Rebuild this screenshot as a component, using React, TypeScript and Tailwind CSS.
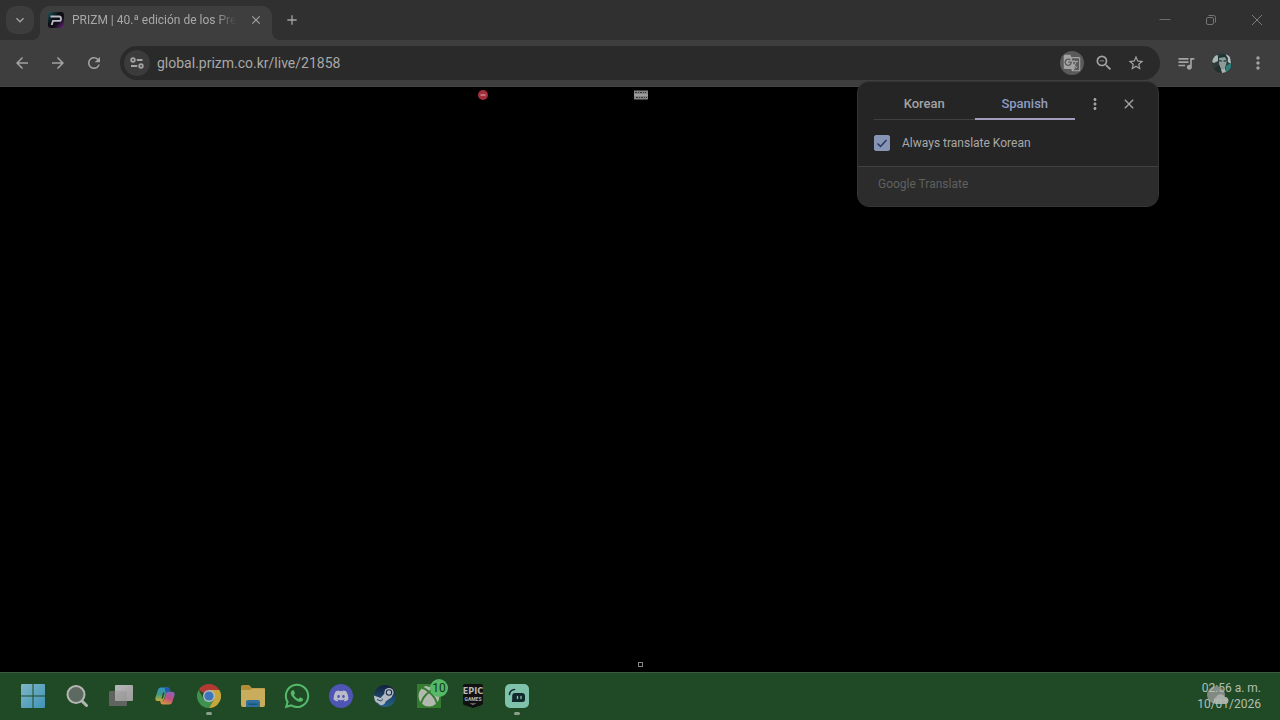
import { useState } from "react";
import type { ReactNode } from "react";
import {
  MdAdd,
  MdArrowBack,
  MdArrowForward,
  MdClose,
  MdGTranslate,
  MdKeyboardArrowDown,
  MdMoreVert,
  MdQueueMusic,
  MdRefresh,
  MdStarBorder,
  MdZoomOut,
} from "react-icons/md";
import { FaDiscord, FaWhatsapp } from "react-icons/fa";
import { clsx } from "clsx";

function PrizmIcon() {
  return (
    <svg viewBox="0 0 16 16" className="h-4 w-4 shrink-0" aria-hidden>
      <defs>
        <linearGradient id="prizm" x1="0" y1="0" x2="1" y2="1">
          <stop offset="0" stopColor="#1b5c5f" />
          <stop offset="0.4" stopColor="#0c0c12" />
          <stop offset="0.65" stopColor="#140d1c" />
          <stop offset="1" stopColor="#6b2a86" />
        </linearGradient>
      </defs>
      <rect width="16" height="16" rx="3" fill="url(#prizm)" />
      <path d="M2.500 4.500H11a2 2 0 0 1 2 2v.4a2 2 0 0 1-2 2H5L3.600 13" fill="none" stroke="#b9bcc4" strokeWidth="1.8" />
    </svg>
  );
}

function TuneIcon() {
  return (
    <svg viewBox="0 0 16 16" className="h-4 w-4" fill="none" stroke="#a3a3a3" strokeWidth="1.8" aria-hidden>
      <circle cx="4" cy="5" r="1.800" />
      <path d="M7.800 5H13.500M2 11h6.200" />
      <circle cx="12" cy="11" r="1.800" />
    </svg>
  );
}

function Avatar() {
  return (
    <svg viewBox="0 0 20 20" className="h-5 w-5" aria-hidden>
      <defs>
        <clipPath id="avatar">
          <circle cx="10" cy="10" r="10" />
        </clipPath>
      </defs>
      <g clipPath="url(#avatar)">
        <rect width="20" height="20" fill="#303a3a" />
        <path d="M0 5l4-3 3 1-1 5-4 2-2-1z" fill="#a9b5b3" />
        <path d="M14 1l4 2 1 8-3-2z" fill="#b6bebd" />
        <path d="M6 3l6-2 4 4-1 4-9-1z" fill="#1c3534" />
        <path d="M7 5l6-1 2 4-2 7-4 1-2-5z" fill="#8e9a98" />
        <path d="M7 7l3 .6v1L7.4 8.500zM11.500 7.500L15 7l-.5 1.500-3 .3z" fill="#173c3d" />
        <path d="M3 15l4-3 2 5 1 3H3z" fill="#23302f" />
        <path d="M14 13l5-3v7l-5 3z" fill="#2b8079" />
        <path d="M9 16l4-1 1 5h-4z" fill="#aab3b1" />
      </g>
    </svg>
  );
}

function StartIcon() {
  return (
    <svg viewBox="0 0 24 24" className="h-6 w-6" aria-hidden>
      <defs>
        <linearGradient id="start" x1="0" y1="0" x2="1" y2="1">
          <stop offset="0" stopColor="#7fb6c6" />
          <stop offset="1" stopColor="#3f93b8" />
        </linearGradient>
      </defs>
      <path d="M1 0h10.500v11.500H0V1a1 1 0 0 1 1-1zM12.500 0H23a1 1 0 0 1 1 1v10.500H12.500zM0 12.500h11.500V24H1a1 1 0 0 1-1-1zM12.500 12.500H24V23a1 1 0 0 1-1 1H12.500z" fill="url(#start)" />
    </svg>
  );
}

function SearchIcon() {
  return (
    <svg viewBox="0 0 24 24" className="h-6 w-6" aria-hidden>
      <path d="M17 17l4.500 4.500" stroke="#b4b6b3" strokeWidth="3" strokeLinecap="round" />
      <circle cx="11" cy="10.500" r="8.500" fill="#5d6a62" stroke="#b4b6b3" strokeWidth="2" />
    </svg>
  );
}

function TaskViewIcon() {
  return (
    <svg viewBox="0 0 26 24" className="h-6 w-[26px]" aria-hidden>
      <defs>
        <linearGradient id="taskview" x1="0" y1="0" x2="1" y2="1">
          <stop offset="0" stopColor="#b9b9b9" />
          <stop offset="1" stopColor="#9c9c9c" />
        </linearGradient>
      </defs>
      <rect x="1" y="7" width="18" height="15" rx="1" fill="#5f6461" />
      <rect x="7" y="1" width="18" height="16" rx="1" fill="url(#taskview)" />
      <path d="M7 7h12v10H7z" fill="#888" opacity="0.300" />
    </svg>
  );
}

function CopilotIcon() {
  return (
    <svg viewBox="0 0 20 18" className="h-[18px] w-5" aria-hidden>
      <defs>
        <linearGradient id="copilot-a" x1="0" y1="0" x2="0" y2="1">
          <stop offset="0" stopColor="#2f93c9" />
          <stop offset="0.500" stopColor="#3f9a86" />
          <stop offset="1" stopColor="#c6ac31" />
        </linearGradient>
        <linearGradient id="copilot-b" x1="0.700" y1="0" x2="0.300" y2="1">
          <stop offset="0" stopColor="#8a63b8" />
          <stop offset="0.500" stopColor="#c24f81" />
          <stop offset="1" stopColor="#d09a3c" />
        </linearGradient>
      </defs>
      <path d="M14 17.500H8c-1.500 0-2.200-.9-2.500-2L5 13.800h2.200c1.300 0 1.900-.7 2.200-1.800L11 6.300C11.400 5 12.200 4.700 13.500 4.700H17c2.200 0 3.100 1.500 2.500 3.500l-2.200 6.800C16.700 16.700 15.700 17.500 14 17.500z" fill="url(#copilot-b)" />
      <path d="M6 .5h6.500c1.300 0 2 .9 2.300 2l.6 2.200h-2.400c-1.200 0-1.800.7-2.100 1.700L9 12c-.4 1.200-1 2-2.500 2H3C.8 14-.1 12.500.5 10.500L2.700 3.500C3.200 1.500 4.300.5 6 .5z" fill="url(#copilot-a)" />
      <path d="M9.500.5h3c1.300 0 2 .9 2.300 2l.6 2.200h-2.400c-1.200 0-1.800.7-2.100 1.700z" fill="#2457b5" />
      <path d="M8 5.500h1.500L8 11.500H6.500z" fill="#204a25" />
    </svg>
  );
}

function ChromeIcon() {
  return (
    <svg viewBox="0 0 24 24" className="h-6 w-6" aria-hidden>
      <path d="M12 12L1.600 6A12 12 0 0 1 22.400 6z" fill="#b33a33" />
      <path d="M1.600 6a12 12 0 0 0 10.400 18l5.200-9L12 12 6.800 15z" fill="#3f9150" />
      <path d="M12 24A12 12 0 0 0 22.400 6H12l5.200 9z" fill="#c5a73c" />
      <circle cx="12" cy="12" r="6" fill="#b7bcbb" />
      <circle cx="12" cy="12" r="4.600" fill="#3c74bb" />
    </svg>
  );
}

function FolderIcon() {
  return (
    <svg viewBox="0 0 26 24" className="h-6 w-[26px]" aria-hidden>
      <path d="M1 2.500A1.500 1.500 0 0 1 2.500 1H9l3 3h12a1 1 0 0 1 1 1v6H1z" fill="#b08d36" />
      <path d="M1 6h9l2-1.500h12.500a.5.5 0 0 1 .5.500v16a2 2 0 0 1-2 2H3a2 2 0 0 1-2-2z" fill="#c9ad5c" />
      <path d="M8 16h10a2 2 0 0 1 2 2v5H6v-5a2 2 0 0 1 2-2z" fill="#2e6f9c" />
      <path d="M8.500 19.500h9V21h-9z" fill="#1d5277" />
    </svg>
  );
}

function SteamIcon() {
  return (
    <svg viewBox="0 0 24 24" className="h-6 w-6" aria-hidden>
      <defs>
        <linearGradient id="steam" x1="0" y1="0" x2="0" y2="1">
          <stop offset="0" stopColor="#14203c" />
          <stop offset="1" stopColor="#27628c" />
        </linearGradient>
        <clipPath id="steam-clip">
          <circle cx="12" cy="12" r="11" />
        </clipPath>
      </defs>
      <circle cx="12" cy="12" r="11" fill="url(#steam)" />
      <g clipPath="url(#steam-clip)">
        <path d="M0 11l7.500 3 4.500-5h6l1 4-6.500 4.500A4 4 0 0 1 5 19L0 17z" fill="#b5bbc0" />
        <circle cx="16" cy="8.500" r="4.600" fill="#b5bbc0" />
        <circle cx="16" cy="8.500" r="2.700" fill="#b5bbc0" stroke="#1b3152" strokeWidth="1.100" />
        <path d="M4 15.500l4 1.500a1.500 1.500 0 0 0 1-2.500" fill="none" stroke="#244f77" strokeWidth="1" />
      </g>
    </svg>
  );
}

function XboxIcon() {
  return (
    <span className="relative flex h-6 w-6">
      <svg viewBox="0 0 24 24" className="h-6 w-6" aria-hidden>
        <rect width="24" height="24" fill="#347d30" />
        <circle cx="12" cy="12" r="10.500" fill="#b3b9b0" />
        <path d="M4 3.500C8 4 10 6 12 8c2-2 4-4 8-4.500M12 8C8 11 5 15.500 4 20M12 8c4 3 7 7.500 8 12" fill="none" stroke="#347d30" strokeWidth="2" />
        <path d="M7 1.500c2 0 3.500.7 5 1.700 1.500-1 3-1.700 5-1.700L12 0z" fill="#347d30" />
      </svg>
      <span className="absolute -top-[5px] -right-[7px] flex h-[18px] w-[18px] items-center justify-center rounded-full bg-[#55b866] text-[12px] leading-none text-[#123718]">
        10
      </span>
    </span>
  );
}

function EpicIcon() {
  return (
    <span className="relative flex h-6 w-5 flex-col items-center">
      <svg viewBox="0 0 20 24" className="absolute inset-0 h-6 w-5" aria-hidden>
        <path d="M2 0h16a2 2 0 0 1 2 2v17.500a1.500 1.500 0 0 1-1 1.400L10 24l-9-3.100a1.500 1.500 0 0 1-1-1.400V2a2 2 0 0 1 2-2z" fill="#101010" />
        <path d="M6.500 19.500h7L10 20.800z" fill="#a9a9a9" />
      </svg>
      <span className="relative mt-[2px] font-['Liberation_Sans_Narrow','DejaVu_Sans_Condensed'] text-[9px] leading-[10px] font-bold text-[#b8b8b8]">
        EPIC
      </span>
      <span className="relative text-[5px] leading-[6px] font-bold text-[#b8b8b8]">GAMES</span>
    </span>
  );
}

function StreamlabsIcon() {
  return (
    <svg viewBox="0 0 24 24" className="h-6 w-6" aria-hidden>
      <rect width="24" height="24" rx="5" fill="#7fc2ab" />
      <path d="M4.500 10.500a5 5 0 0 1 5-5" fill="none" stroke="#12292b" strokeWidth="1.600" strokeLinecap="round" />
      <path d="M10 9h7a3 3 0 0 1 3 3v3.500a2.500 2.500 0 0 1-2.500 2.500H7.500a.7.7 0 0 1-.6-1l.3-1.500V12a3 3 0 0 1 2.800-3z" fill="#12292b" />
      <path d="M12.500 12.500v2M16 12.500v2" stroke="#7fc2ab" strokeWidth="1.400" strokeLinecap="round" />
    </svg>
  );
}

const apps: { name: string; icon: ReactNode; running?: boolean }[] = [
  { name: "Inicio", icon: <StartIcon /> },
  { name: "Buscar", icon: <SearchIcon /> },
  { name: "Vista de tareas", icon: <TaskViewIcon /> },
  { name: "Copilot", icon: <CopilotIcon /> },
  { name: "Chrome", icon: <ChromeIcon />, running: true },
  { name: "Explorador", icon: <FolderIcon /> },
  { name: "WhatsApp", icon: <FaWhatsapp aria-hidden className="h-7 w-7 text-[#55b96c]" /> },
  {
    name: "Discord",
    icon: (
      <span className="flex h-6 w-6 items-center justify-center rounded-full bg-[#4f55b5]">
        <FaDiscord aria-hidden className="h-4 w-4 text-[#b9bbcb]" />
      </span>
    ),
  },
  { name: "Steam", icon: <SteamIcon /> },
  { name: "Xbox", icon: <XboxIcon /> },
  { name: "Epic Games", icon: <EpicIcon /> },
  { name: "Streamlabs", icon: <StreamlabsIcon />, running: true },
];

function IconButton({ label, className, children }: { label: string; className?: string; children: ReactNode }) {
  return (
    <button aria-label={label} className={clsx("flex shrink-0 items-center justify-center text-[#a3a3a3]", className)}>
      {children}
    </button>
  );
}

function TabStrip() {
  return (
    <header className="flex h-10 items-center bg-[#303030] pl-[6px]">
      <IconButton label="Search tabs" className="h-7 w-7 rounded-[10px] bg-[#3d3d3d]">
        <MdKeyboardArrowDown className="h-4 w-4 stroke-current" />
      </IconButton>
      <div className="relative ml-[6px] flex h-[34px] w-[232px] items-center self-end rounded-t-[10px] bg-[#3e3e3e] px-2 pb-[6px]">
        <svg viewBox="0 0 8 8" className="absolute bottom-0 -left-2 h-2 w-2" aria-hidden>
          <path d="M8 0v8H0a8 8 0 0 0 8-8z" fill="#3e3e3e" />
        </svg>
        <svg viewBox="0 0 8 8" className="absolute -right-2 bottom-0 h-2 w-2" aria-hidden>
          <path d="M0 0v8h8a8 8 0 0 1-8-8z" fill="#3e3e3e" />
        </svg>
        <PrizmIcon />
        <span className="ml-2 min-w-0 flex-1 overflow-hidden text-[12px] whitespace-nowrap text-[#a8a8a8] [mask-image:linear-gradient(to_right,black_88%,transparent)]">
          PRIZM | 40.ª edición de los Prem
        </span>
        <IconButton label="Close tab" className="ml-3 h-4 w-4">
          <MdClose className="h-[14px] w-[14px] stroke-current" />
        </IconButton>
      </div>
      <IconButton label="New tab" className="ml-[6px] h-7 w-7">
        <MdAdd className="h-4 w-4 stroke-current" />
      </IconButton>
      <div className="ml-auto flex">
        <IconButton label="Minimize" className="h-10 w-[46px]">
          <svg viewBox="0 0 12 12" className="h-3 w-3" stroke="#6c6c6c" aria-hidden>
            <path d="M0.500 5.500h11" />
          </svg>
        </IconButton>
        <IconButton label="Restore" className="h-10 w-[46px]">
          <svg viewBox="0 0 12 12" className="h-3 w-3" fill="none" stroke="#747474" aria-hidden>
            <rect x="1.500" y="3.500" width="7" height="7" rx="1.500" />
            <path d="M3.500 1.500h5a2 2 0 0 1 2 2v5" />
          </svg>
        </IconButton>
        <IconButton label="Close" className="h-10 w-[46px]">
          <svg viewBox="0 0 12 12" className="h-3 w-3" stroke="#7d7d7d" aria-hidden>
            <path d="M1 1l10 10M11 1L1 11" />
          </svg>
        </IconButton>
      </div>
    </header>
  );
}

function Toolbar() {
  return (
    <nav className="flex h-[47px] items-center border-b border-[#454545] bg-[#3e3e3e] px-1">
      <IconButton label="Back" className="h-9 w-9">
        <MdArrowBack className="h-[18px] w-[18px]" />
      </IconButton>
      <IconButton label="Forward" className="h-9 w-9">
        <MdArrowForward className="h-[18px] w-[18px]" />
      </IconButton>
      <IconButton label="Reload" className="h-9 w-9">
        <MdRefresh className="h-[18px] w-[18px]" />
      </IconButton>
      <div className="mx-2 flex h-[34px] flex-1 items-center rounded-full bg-[#2a2a2a] pr-2 pl-1">
        <IconButton label="Site information" className="h-[26px] w-[26px] rounded-full bg-[#3b3b3b]">
          <TuneIcon />
        </IconButton>
        <input
          aria-label="Address"
          defaultValue="global.prizm.co.kr/live/21858"
          className="ml-[7px] min-w-0 flex-1 bg-transparent text-[14px] text-[#a8a8a8] outline-none"
        />
        <IconButton label="Translate this page" className="mx-1 h-6 w-6 rounded-full bg-[#5a5a5a]">
          <MdGTranslate className="h-[18px] w-[18px]" />
        </IconButton>
        <IconButton label="Zoom" className="h-8 w-8">
          <MdZoomOut className="h-5 w-5" />
        </IconButton>
        <IconButton label="Bookmark this tab" className="h-8 w-8">
          <MdStarBorder className="h-[18px] w-[18px] stroke-current" />
        </IconButton>
      </div>
      <IconButton label="Media control" className="h-9 w-9">
        <MdQueueMusic className="h-5 w-5" />
      </IconButton>
      <IconButton label="Profile" className="h-9 w-9">
        <Avatar />
      </IconButton>
      <IconButton label="Menu" className="h-9 w-9">
        <MdMoreVert className="h-5 w-5" />
      </IconButton>
    </nav>
  );
}

function TranslatePopup() {
  const [language, setLanguage] = useState("Spanish");
  const [always, setAlways] = useState(true);

  return (
    <section className="absolute top-[81px] right-[121px] z-10 w-[302px] overflow-hidden rounded-xl border border-[#343434] bg-[#252525]">
      <div className="flex h-[38px] items-end pr-3 pl-4">
        {["Korean", "Spanish"].map((name) => (
          <button
            key={name}
            onClick={() => setLanguage(name)}
            className={clsx(
              "h-8 flex-1 text-[13px] font-medium",
              language === name ? "text-[#8e9cc0] shadow-[inset_0_-2px_0_#a29dbd]" : "text-[#a3a3a3] shadow-[inset_0_-1px_0_#404040]",
            )}
          >
            {name}
          </button>
        ))}
        <IconButton label="Translate options" className="ml-[3px] h-8 w-[34px]">
          <MdMoreVert className="h-[18px] w-[18px]" />
        </IconButton>
        <IconButton label="Close translate" className="h-8 w-[34px]">
          <MdClose className="h-4 w-4 stroke-current" />
        </IconButton>
      </div>
      <label className="flex h-[46px] items-center gap-3 pl-4 text-[12px] text-[#a8a8a8]">
        <span className="relative h-4 w-4">
          <input
            type="checkbox"
            checked={always}
            onChange={(e) => setAlways(e.target.checked)}
            className="block h-4 w-4 appearance-none rounded-[2px] border border-[#8695b5] checked:bg-[#8695b5]"
          />
          {always && (
            <svg viewBox="0 0 16 16" className="pointer-events-none absolute inset-0 h-4 w-4" fill="none" stroke="#26365c" strokeWidth="1.500" aria-hidden>
              <path d="M3.500 8.500l3 3 6-6.500" />
            </svg>
          )}
        </span>
        Always translate Korean
      </label>
      <p className="flex h-10 items-center border-t border-[#414141] bg-[#2c2c2c] pb-[6px] pl-5 text-[12px] text-[#606060]">Google Translate</p>
    </section>
  );
}

function Page() {
  return (
    <main className="flex flex-1 flex-col justify-between bg-black">
      <div className="grid grid-cols-2 items-center pt-[3px]">
        <svg viewBox="0 0 10 10" className="mr-[152px] h-[10px] w-[10px] justify-self-end" aria-hidden>
          <circle cx="5" cy="5" r="5" fill="#a32f3c" />
          <path d="M2.500 5h5" stroke="#c98d92" strokeWidth="1.500" />
        </svg>
        <svg viewBox="0 0 14 10" className="-ml-[6px] h-[10px] w-[14px]" aria-hidden>
          <rect width="14" height="9" y="0.500" fill="#858585" />
          <path d="M1 2.500h11M2 7.500h11" stroke="#333" strokeDasharray="2 1 1 1" />
          <path d="M0 5h14" stroke="#b5b5b5" />
        </svg>
      </div>
      <svg viewBox="0 0 5 5" className="mb-[5px] h-[5px] w-[5px] self-center" aria-hidden>
        <rect x="0.500" y="0.500" width="4" height="4" fill="none" stroke="#858585" />
      </svg>
    </main>
  );
}

function Taskbar() {
  return (
    <footer className="flex h-12 items-center border-t border-[#3f5941] bg-[#204a25] pr-[19px] pb-[2px] pl-[11px]">
      {apps.map((app) => (
        <button key={app.name} aria-label={app.name} className="relative flex h-11 w-11 items-center justify-center">
          {app.icon}
          {app.running && <span className="absolute bottom-[3px] h-[3px] w-[6px] rounded-full bg-[#8b9f8b]" />}
        </button>
      ))}
      <div className="relative ml-auto text-right text-[12px] leading-4 text-[#b3beb1]">
        <svg viewBox="0 0 24 20" className="absolute top-[6px] left-2 h-5 w-6" aria-hidden>
          <circle cx="11" cy="9" r="9" fill="#838a84" />
          <path d="M11 18a4 4 0 0 1 0-7 5 5 0 0 1 9 0 3.500 3.500 0 0 1 0 7z" fill="#a9aeaa" />
        </svg>
        <time className="relative block">02:56 a. m.</time>
        <time className="relative block">10/01/2026</time>
      </div>
    </footer>
  );
}

export default function App() {
  return (
    <div className="relative flex min-h-screen flex-col bg-black font-['Roboto','Noto_Sans',sans-serif]">
      <TabStrip />
      <Toolbar />
      <TranslatePopup />
      <Page />
      <Taskbar />
    </div>
  );
}
